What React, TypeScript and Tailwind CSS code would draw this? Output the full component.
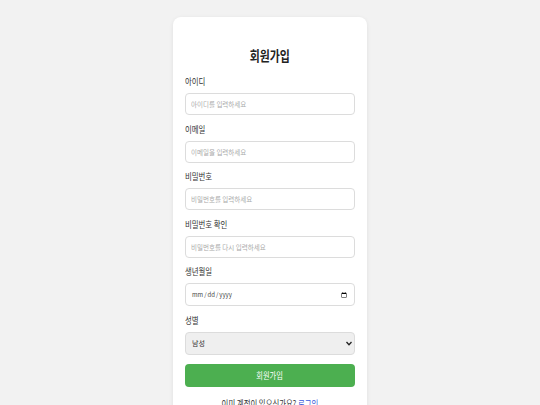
export default function App() {
  const font = { fontFamily: '"Noto Sans CJK KR", "Noto Sans", sans-serif' };
  const inputCls =
    "block w-full h-[22px] px-[5px] text-[6.5px] text-gray-800 border border-[#dcdcdc] rounded-[4px] bg-white placeholder:text-[#aaaaaa] outline-none";
  const labelCls = "block text-[9px] leading-[12px] text-[#333] mb-[5px]";
  const squeeze = "inline-block origin-left scale-x-[0.82] whitespace-nowrap";

  return (
    <div className="min-h-screen bg-[#f2f2f2] pt-[17px]" style={font}>
      <div className="mx-auto w-[194px] bg-white rounded-[8px] shadow-[0_1px_4px_rgba(0,0,0,0.08)] px-3 pt-[29px] pb-6">
        <h1 className="text-center text-[14px] leading-[18px] font-bold text-[#222] mb-[12px]">
          <span className="inline-block scale-x-[0.78]">회원가입</span>
        </h1>

        <div className="mb-[8.5px]">
          <label className={labelCls}><span className={squeeze}>아이디</span></label>
          <input className={inputCls} placeholder="아이디를 입력하세요" />
        </div>
        <div className="mb-[8.5px]">
          <label className={labelCls}><span className={squeeze}>이메일</span></label>
          <input className={inputCls} placeholder="이메일을 입력하세요" />
        </div>
        <div className="mb-[8.5px]">
          <label className={labelCls}><span className={squeeze}>비밀번호</span></label>
          <input className={inputCls} type="password" placeholder="비밀번호를 입력하세요" />
        </div>
        <div className="mb-[8.5px]">
          <label className={labelCls}><span className={squeeze}>비밀번호 확인</span></label>
          <input className={inputCls} type="password" placeholder="비밀번호를 다시 입력하세요" />
        </div>
        <div className="mb-[9px]">
          <label className={labelCls}><span className={squeeze}>생년월일</span></label>
          <input
            className="block w-full h-[23px] px-[5px] text-[6px] text-[#444] border border-[#dcdcdc] rounded-[4px] bg-white outline-none"
            type="date"
          />
        </div>
        <div className="mb-[9px]">
          <label className={labelCls}><span className={squeeze}>성별</span></label>
          <div className="relative">
            <select className="block w-full h-[23px] px-[6px] text-[7px] text-[#333] border border-[#dcdcdc] rounded-[4px] bg-[#efefef] appearance-none outline-none">
              <option>남성</option>
              <option>여성</option>
            </select>
            <svg
              className="absolute right-[3px] top-[9px] pointer-events-none"
              width="6"
              height="5"
              viewBox="0 0 6 5"
            >
              <path d="M0.5 1 L3 3.8 L5.5 1" fill="none" stroke="#222" strokeWidth="1.3" />
            </svg>
          </div>
        </div>

        <button className="block w-full h-[23px] rounded-[4px] bg-[#4caf50] text-white text-[9px]">
          <span className="inline-block scale-x-[0.8]">회원가입</span>
        </button>

        <p className="text-center text-[9px] leading-[12px] text-[#333] mt-[11px]">
          <span className="inline-block scale-x-[0.82] whitespace-nowrap">
            이미 계정이 있으신가요? <a className="text-[#3b5bdb]">로그인</a>
          </span>
        </p>
      </div>
    </div>
  );
}
